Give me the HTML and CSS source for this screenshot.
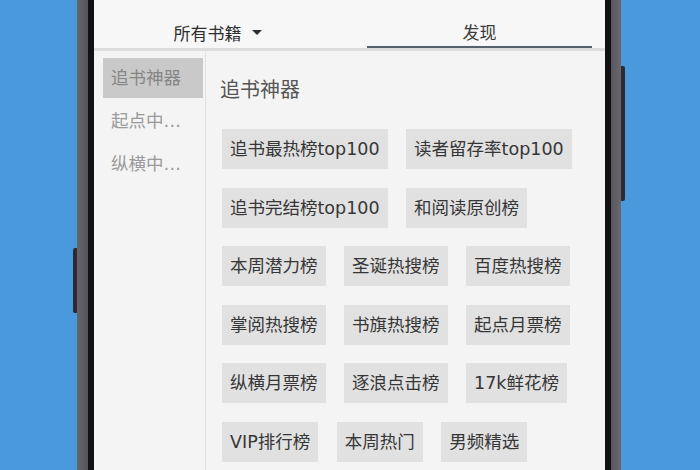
FILE: index.html
```html
<!DOCTYPE html>
<html lang="zh-CN">
<head>
<meta charset="utf-8">
<title>发现</title>
<link rel="stylesheet" href="styles.css">
</head>
<body>
<div class="stage">
  <div class="phone">
    <div class="bezel bezel-left"><span class="btn btn-left"></span></div>
    <div class="screen">
      <div class="tabs">
        <div class="tab tab-left">所有书籍<span class="caret"></span></div>
        <div class="tab tab-right">发现</div>
      </div>
      <div class="content">
        <div class="sidebar">
          <div class="side-item selected">追书神器</div>
          <div class="side-item">起点中…</div>
          <div class="side-item">纵横中…</div>
        </div>
        <div class="main">
          <div class="heading">追书神器</div>
          <div class="tag-list">
            <div class="tag-row"><span class="tag">追书最热榜top100</span><span class="tag">读者留存率top100</span></div>
            <div class="tag-row"><span class="tag">追书完结榜top100</span><span class="tag">和阅读原创榜</span></div>
            <div class="tag-row"><span class="tag">本周潜力榜</span><span class="tag">圣诞热搜榜</span><span class="tag">百度热搜榜</span></div>
            <div class="tag-row"><span class="tag">掌阅热搜榜</span><span class="tag">书旗热搜榜</span><span class="tag">起点月票榜</span></div>
            <div class="tag-row"><span class="tag">纵横月票榜</span><span class="tag">逐浪点击榜</span><span class="tag">17k鲜花榜</span></div>
            <div class="tag-row"><span class="tag">VIP排行榜</span><span class="tag">本周热门</span><span class="tag">男频精选</span></div>
          </div>
        </div>
      </div>
    </div>
    <div class="bezel bezel-right"><span class="btn btn-right"></span></div>
  </div>
</div>
</body>
</html>
```

FILE: styles.css
```css
html, body {
  margin: 0;
  padding: 0;
}
body {
  width: 700px;
  height: 470px;
  overflow: hidden;
  font-family: "DejaVu Sans", "Noto Sans CJK SC", sans-serif;
}
.stage {
  width: 700px;
  height: 470px;
  box-sizing: border-box;
  padding-left: 77px;
  background: #4a99dd;
  display: flex;
  overflow: hidden;
}
.phone {
  display: flex;
  height: 470px;
}
.bezel {
  position: relative;
  height: 470px;
}
.bezel-left {
  width: 17px;
  background: linear-gradient(to right, #66656b 0, #55545a 11px, #121214 11px, #121214 17px);
}
.bezel-right {
  width: 16px;
  background: linear-gradient(to right, #121214 0, #121214 6px, #58565c 6px, #6a686e 16px);
}
.btn {
  position: absolute;
  width: 4px;
  background: #2b2b31;
}
.btn-left {
  left: -4px;
  top: 248px;
  height: 65px;
  border-radius: 2px 0 0 2px;
}
.btn-right {
  right: -4px;
  top: 66px;
  height: 135px;
  border-radius: 0 2px 2px 0;
}
.screen {
  width: 511px;
  height: 470px;
  background: #f4f4f4;
  display: flex;
  flex-direction: column;
  overflow: hidden;
}
.tabs {
  display: flex;
  height: 48px;
  background: #f7f7f7;
  border-bottom: 3px solid #dcdcdc;
  flex: none;
}
.tab {
  display: flex;
  align-items: center;
  justify-content: center;
  box-sizing: border-box;
  padding-top: 16px;
  font-size: 17px;
  color: #2e2e2e;
}
.tab-left {
  width: 257px;
  padding-right: 10px;
}
.tab-right {
  flex: 1;
  margin: 0 13px 0 16px;
  border-bottom: 2px solid #56616c;
  color: #3a3a3a;
}
.caret {
  width: 0;
  height: 0;
  margin-left: 10px;
  border-left: 5px solid transparent;
  border-right: 5px solid transparent;
  border-top: 5px solid #2e2e2e;
}
.content {
  display: flex;
  flex: 1;
}
.sidebar {
  width: 112px;
  box-sizing: border-box;
  padding: 7px 0 0 9px;
  border-right: 1px solid #e2e2e2;
  flex: none;
}
.side-item {
  width: 100px;
  height: 40px;
  line-height: 40px;
  box-sizing: border-box;
  padding-left: 8px;
  margin-bottom: 3px;
  font-size: 17.5px;
  color: #9a9a9a;
  white-space: nowrap;
  overflow: hidden;
}
.side-item.selected {
  background: #c9c9c9;
  color: #858585;
}
.main {
  flex: 1;
  padding: 25px 0 0 14px;
}
.heading {
  font-size: 20px;
  line-height: 28px;
  color: #555;
  margin-bottom: 25px;
}
.tag-list {
  display: flex;
  flex-direction: column;
  gap: 18.5px;
  padding-left: 2px;
}
.tag-row {
  display: flex;
  gap: 18.5px;
}
.tag {
  height: 40px;
  line-height: 40px;
  padding: 0 8px;
  background: #e1e1e1;
  color: #363636;
  font-size: 17.5px;
  white-space: nowrap;
}
```
